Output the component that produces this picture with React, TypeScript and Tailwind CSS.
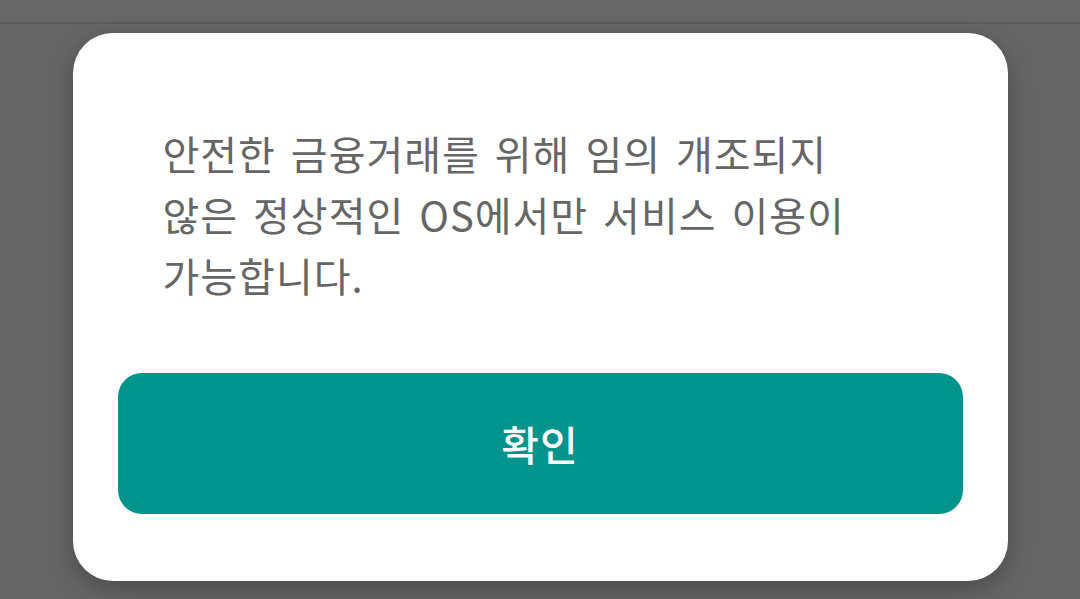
import React from "react";

export default function App() {
  return (
    <div
      className="relative w-[1080px] h-[599px] bg-[#656565] overflow-hidden"
      style={{ fontFamily: '"Noto Sans CJK KR", "Noto Sans", sans-serif' }}
    >
      {/* status strip */}
      <div className="h-[24px] border-b-[2px] border-[#5c5c5c] bg-[#676767]" />

      <div className="flex justify-center pt-[9px]">
        <div className="w-[935px] h-[548px] bg-white rounded-[40px] shadow-[0_8px_24px_rgba(0,0,0,0.25)] flex flex-col px-[45px]">
          <p className="pt-[90px] pl-[45px] text-[40px] leading-[61px] text-[#666666] tracking-[1px] [word-spacing:5px]">
            안전한 금융거래를 위해 임의 개조되지
            <br />
            않은 정상적인 OS에서만 서비스 이용이
            <br />
            가능합니다.
          </p>
          <button className="mt-[67px] h-[141px] w-full rounded-[24px] bg-[#00948d] text-white text-[41px] font-medium tracking-[1px]">
            확인
          </button>
        </div>
      </div>
    </div>
  );
}
